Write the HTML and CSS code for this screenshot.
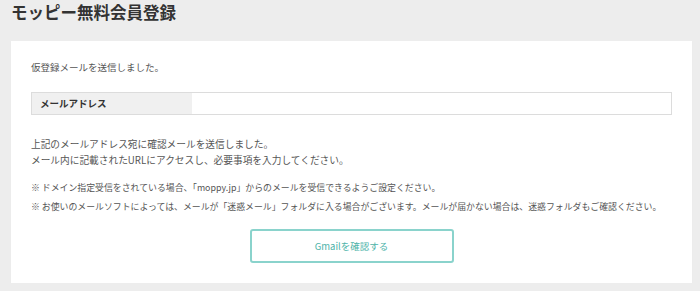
FILE: index.html
```html
<!DOCTYPE html>
<html lang="ja">
<head>
  <meta charset="UTF-8" />
  <title>モッピー無料会員登録</title>
  <link rel="stylesheet" href="styles.css">
</head>
<body>
  <h1 class="page-title">モッピー無料会員登録</h1>

  <div class="card">
    <p class="lead">仮登録メールを送信しました。</p>

    <div class="field">
      <div class="field-label">メールアドレス</div>
      <div class="field-value"></div>
    </div>

    <p class="message">上記のメールアドレス宛に確認メールを送信しました。<br>メール内に記載されたURLにアクセスし、必要事項を入力してください。</p>

    <ul class="notes">
      <li>※ ドメイン指定受信をされている場合、「moppy.jp」からのメールを受信できるようご設定ください。</li>
      <li>※ お使いのメールソフトによっては、メールが「迷惑メール」フォルダに入る場合がございます。メールが届かない場合は、迷惑フォルダもご確認ください。</li>
    </ul>

    <div class="actions">
      <a class="btn" href="#">Gmailを確認する</a>
    </div>
  </div>
</body>
</html>
```

FILE: styles.css
```css
body {
  margin: 0;
  padding: 0 8px 0 11px;
  background: #ededed;
  color: #555;
  font-family: "Noto Sans CJK JP", "Noto Sans", sans-serif;
}
.page-title {
  margin: 0;
  padding-top: 1px;
  height: 40px;
  font-size: 16.5px;
  line-height: 22px;
  font-weight: bold;
  color: #333;
}
.card {
  background: #fff;
  padding: 17px 20px 20px 20px;
  box-shadow: 0 1px 1px rgba(0, 0, 0, 0.04);
}
.lead {
  margin: 0 0 16px;
  font-size: 9.5px;
  line-height: 18px;
}
.field {
  display: flex;
  height: 23px;
  border: 1px solid #dcdcdc;
  box-sizing: border-box;
}
.field-label {
  width: 160px;
  background: #f0f0f0;
  font-size: 9.5px;
  font-weight: bold;
  color: #333;
  line-height: 21px;
  padding-left: 8px;
  box-sizing: border-box;
}
.field-value {
  flex: 1;
}
.message {
  margin: 21px 0 10px;
  font-size: 9.7px;
  line-height: 16px;
}
.notes {
  list-style: none;
  margin: 0;
  padding: 0;
  font-size: 8.9px;
  line-height: 19px;
}
.actions {
  display: flex;
  justify-content: center;
  margin-top: 13px;
}
.btn {
  display: block;
  width: 204px;
  height: 34px;
  box-sizing: border-box;
  border: 2px solid #8ad3cc;
  border-radius: 3px;
  color: #4db3a9;
  text-decoration: none;
  text-align: center;
  font-size: 9.5px;
  line-height: 30px;
}
```
